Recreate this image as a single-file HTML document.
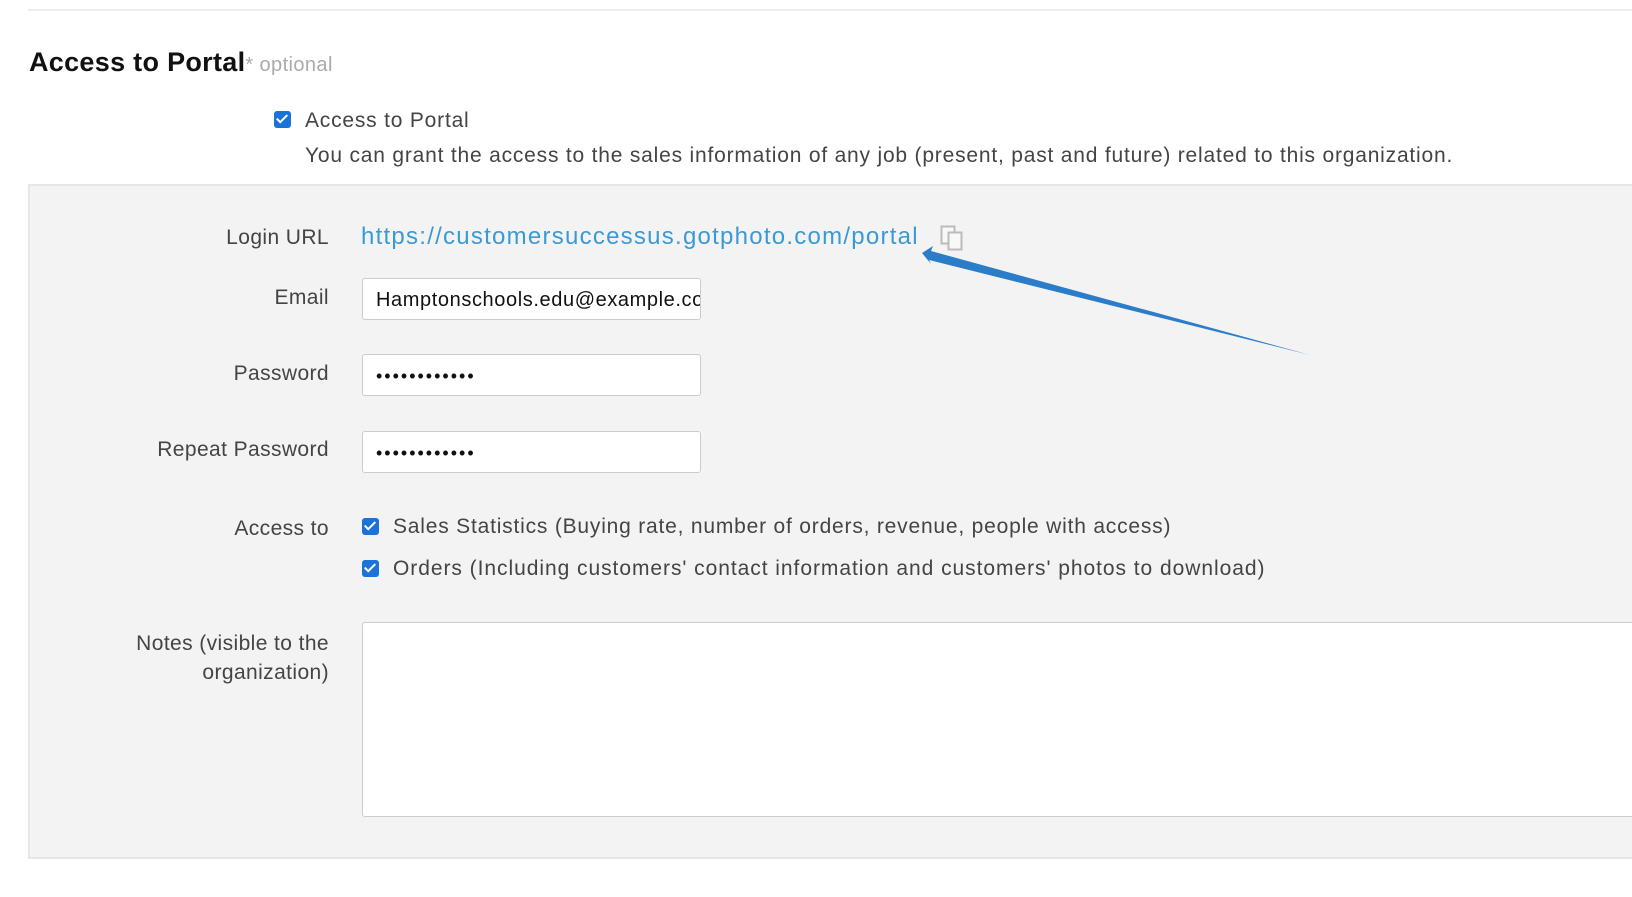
<!DOCTYPE html>
<html><head><style>
body{margin:0;width:1632px;height:897px;background:#fff;font-family:"Liberation Sans",sans-serif;color:#333;position:relative;overflow:hidden}
.a{position:absolute;white-space:nowrap}
.lbl{position:absolute;right:1303px;font-size:21px;letter-spacing:0.4px;color:#444;text-align:right}
.cb{position:absolute;width:17px;height:17px;background:#1a73d9;border-radius:3px}
.cb:after{content:"";position:absolute;left:5px;top:1px;width:4px;height:9px;border:solid #fff;border-width:0 2.5px 2.5px 0;transform:rotate(45deg)}
.in{position:absolute;left:362px;width:339px;height:42px;background:#fff;border:1px solid #ccc;border-radius:3px;font-size:20px;letter-spacing:0.6px;color:#111;line-height:42px;padding-left:13px;box-sizing:border-box;overflow:hidden}
.t{font-size:21px;letter-spacing:0.8px;color:#444}
</style></head><body>
<div class="a" style="left:28px;top:9px;width:1604px;height:2px;background:#eee"></div>
<div class="a" style="left:29px;top:47px;font-size:27px;letter-spacing:0.3px;font-weight:bold;color:#111">Access to Portal<span style="font-size:20px;letter-spacing:0.4px;font-weight:normal;color:#aaa">* optional</span></div>
<div class="cb" style="left:274px;top:111px"></div>
<div class="a t" style="left:305px;top:109px">Access to Portal</div>
<div class="a t" style="left:305px;top:144px">You can grant the access to the sales information of any job (present, past and future) related to this organization.</div>
<div class="a" style="left:28px;top:184px;width:1620px;height:675px;background:#f3f3f3;border:2px solid #e6e6e6;box-sizing:border-box"></div>
<div class="lbl" style="top:226px">Login URL</div>
<div class="a" style="left:361px;top:223px;font-size:24px;letter-spacing:1.25px;color:#3b9ad6">https://customersuccessus.gotphoto.com/portal</div>
<svg class="a" style="left:940px;top:225px" width="26" height="28" viewBox="0 0 26 28"><rect x="1.5" y="1.5" width="13" height="17" fill="#f8f8f8" stroke="#bbb" stroke-width="2"/><rect x="8.5" y="7.5" width="13" height="17" fill="#f8f8f8" stroke="#bbb" stroke-width="2"/></svg>
<svg class="a" style="left:0;top:0" width="1632" height="897"><polygon points="922,253 933,246 931,251 1310,355 929,260 931,264" fill="#2b7dc9"/></svg>
<div class="lbl" style="top:286px">Email</div>
<div class="in" style="top:278px">Hamptonschools.edu@example.com</div>
<div class="lbl" style="top:362px">Password</div>
<div class="in" style="top:354px;letter-spacing:2px;font-size:18px">••••••••••••</div>
<div class="lbl" style="top:438px">Repeat Password</div>
<div class="in" style="top:431px;letter-spacing:2px;font-size:18px">••••••••••••</div>
<div class="lbl" style="top:517px">Access to</div>
<div class="cb" style="left:362px;top:518px"></div>
<div class="a t" style="left:393px;top:515px">Sales Statistics (Buying rate, number of orders, revenue, people with access)</div>
<div class="cb" style="left:362px;top:560px"></div>
<div class="a t" style="left:393px;top:557px;letter-spacing:0.95px">Orders (Including customers' contact information and customers' photos to download)</div>
<div class="lbl" style="top:629px;line-height:29px">Notes (visible to the<br>organization)</div>
<div class="a" style="left:362px;top:622px;width:1290px;height:195px;background:#fff;border:1px solid #ccc;border-radius:3px;box-sizing:border-box"></div>
</body></html>
